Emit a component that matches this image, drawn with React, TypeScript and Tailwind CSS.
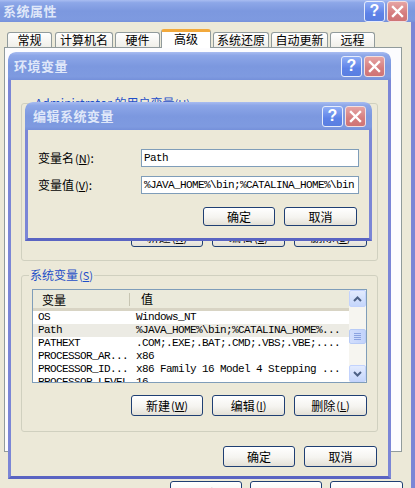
import clsx from "clsx";
import type { ReactNode } from "react";

const cjk = "font-['Noto_Sans_CJK_SC','Noto_Sans',sans-serif]";
const mono = "font-['Liberation_Mono','DejaVu_Sans_Mono',monospace] text-[11px] tracking-[-0.6px]";

function CaptionButtons() {
  return (
    <div className="flex gap-[2px]">
      <div className="w-[21px] h-[21px] rounded-[3px] border border-[#e6ecfb] bg-[linear-gradient(to_bottom,#8fadf6,#5d82e8_60%,#5a7fe0)] flex items-center justify-center text-white text-[16px] font-bold leading-none font-['Liberation_Sans',sans-serif]">
        ?
      </div>
      <div className="w-[21px] h-[21px] rounded-[3px] border border-[#f2e0e0] bg-[linear-gradient(to_bottom,#e6a4a4,#d57d7e_60%,#cf7475)] flex items-center justify-center">
        <svg width="13" height="13" viewBox="0 0 13 13">
          <path d="M2 2L11 11M11 2L2 11" stroke="white" strokeWidth="2.4" strokeLinecap="square" />
        </svg>
      </div>
    </div>
  );
}

function TitleBar({ title, h, pl, pr, rounded }: { title: string; h: string; pl: string; pr: string; rounded?: boolean }) {
  return (
    <div
      className={clsx(
        "flex items-center justify-between bg-[linear-gradient(to_bottom,#a9bdf1_0%,#8da7e8_12%,#7c98df_50%,#7e9ae0_88%,#7590da_100%)]",
        h,
        pl,
        pr,
        rounded && "rounded-t-[7px]"
      )}
    >
      <span className={clsx(cjk, "text-[13px] font-bold tracking-[0.5px] text-[#dfe7f9]")}>{title}</span>
      <CaptionButtons />
    </div>
  );
}

function XpButton({ children, className }: { children: ReactNode; className?: string }) {
  return (
    <div
      className={clsx(
        "rounded-[3px] border border-[#1f3f73] bg-[linear-gradient(to_bottom,#ffffff,#f5f4f0_55%,#e3e0d6)] flex items-center justify-center text-[12px] text-black",
        cjk,
        className
      )}
    >
      {children}
    </div>
  );
}

// label with its (x) access key
function Mn({ label, k }: { label: string; k: string }) {
  return (
    <>
      {label}
      <span className="text-[11px] ml-[1px]">
        (<span className="underline">{k}</span>)
      </span>
    </>
  );
}

function ScrollBtn({ up }: { up?: boolean }) {
  return (
    <div className="h-[17px] rounded-[2px] border border-[#c3d3fd] bg-[linear-gradient(to_bottom,#e3ebfe,#c5d6fb)] flex items-center justify-center">
      <svg width="9" height="6" viewBox="0 0 9 6">
        <path d={up ? "M1 5L4.5 1.5L8 5" : "M1 1L4.5 4.5L8 1"} stroke="#4d6185" strokeWidth="2" fill="none" />
      </svg>
    </div>
  );
}

const rows = [
  ["OS", "Windows_NT"],
  ["Path", "%JAVA_HOME%\\bin;%CATALINA_HOME%..."],
  ["PATHEXT", ".COM;.EXE;.BAT;.CMD;.VBS;.VBE;...."],
  ["PROCESSOR_AR...", "x86"],
  ["PROCESSOR_ID...", "x86 Family 16 Model 4 Stepping ..."],
  ["PROCESSOR_LEVEL", "16"],
];

const tabs = [
  { t: "常规", cls: "w-[45px] ml-[7px]" },
  { t: "计算机名", cls: "w-[58px] ml-[3px]" },
  { t: "硬件", cls: "w-[45px] ml-[2px]" },
  { t: "高级", cls: "w-[50px] ml-[1px]", sel: true },
  { t: "系统还原", cls: "w-[56px] ml-[2px]" },
  { t: "自动更新", cls: "w-[57px] ml-[2px]" },
  { t: "远程", cls: "w-[45px] ml-[2px]" },
];

function VarList() {
  return (
    <div className="w-[335px] h-[94px] border border-[#7f9db9] bg-white flex overflow-hidden">
      <div className="flex-1 flex flex-col">
        <div className={clsx(cjk, "h-[21px] shrink-0 bg-[#ebeadb] border-b-[3px] border-[#d8d4c4] flex items-center text-[12px] text-black")}>
          <span className="w-[97px] pl-[9px] border-r border-[#c7c5b2] leading-[13px]">变量</span>
          <span className="pl-[11px]">值</span>
        </div>
        {rows.map(([k, v], i) => (
          <div key={k} className={clsx(mono, "h-[13px] shrink-0 flex leading-[13px] text-black whitespace-nowrap", i === 1 && "bg-[#ecebe4]")}>
            <span className="w-[103px] pl-[5px] shrink-0">{k}</span>
            <span>{v}</span>
          </div>
        ))}
      </div>
      <div className="w-[17px] bg-[#f6f5f0] flex flex-col">
        <ScrollBtn up />
        <div className="h-[22px]" />
        <div className="h-[15px] rounded-[2px] border border-[#b8cbf6] bg-[linear-gradient(to_right,#d2defc,#c2d3fb)] flex flex-col items-center justify-center gap-[1px]">
          <div className="w-[7px] h-px bg-[#8ba3e0]" />
          <div className="w-[7px] h-px bg-[#8ba3e0]" />
          <div className="w-[7px] h-px bg-[#8ba3e0]" />
          <div className="w-[7px] h-px bg-[#8ba3e0]" />
        </div>
        <div className="flex-1" />
        <ScrollBtn />
      </div>
    </div>
  );
}

export default function App() {
  return (
    <div className="relative w-[415px] h-[488px] overflow-hidden bg-[#ece9d8]">
      {/* 系统属性 */}
      <div className="absolute left-0 top-0 w-[415px] h-[520px] flex flex-col">
        <TitleBar title="系统属性" h="h-[22px]" pl="pl-[3px]" pr="pr-[7px]" />
        <div className="flex-1 flex flex-col border-r-[4px] border-[#7b86d6]">
          <div className="flex items-end h-[18px] mt-[7px]">
            {tabs.map((tab) => (
              <div
                key={tab.t}
                className={clsx(
                  cjk,
                  "text-[12px] text-black flex items-center justify-center rounded-t-[3px] border border-b-0",
                  tab.cls,
                  tab.sel
                    ? "relative z-10 h-[19px] -mb-px bg-white border-[#919b9c] border-t-[3px] border-t-[#f2a93c] pb-[2px]"
                    : "h-[15px] bg-[linear-gradient(to_bottom,#ffffff,#f0efe9)] border-[#919b9c]"
                )}
              >
                {tab.t}
              </div>
            ))}
          </div>
          <div className="ml-[4px] w-[398px] h-[405px] border border-[#919b9c] bg-[#fcfcfe]" />
          <div className="flex gap-[8px] ml-[170px] mt-[29px]">
            <XpButton className="w-[72px] h-[25px]">确定</XpButton>
            <XpButton className="w-[72px] h-[25px]">取消</XpButton>
            <XpButton className="w-[73px] h-[25px]">应用</XpButton>
          </div>
        </div>
      </div>

      {/* 环境变量 */}
      <div className="absolute left-[8px] top-[52px] w-[383px] h-[427px] flex flex-col rounded-t-[8px] overflow-hidden">
        <TitleBar title="环境变量" h="h-[28px]" pl="pl-[6px]" pr="pr-[6px]" rounded />
        <div className="flex-1 bg-[#ece9d8] border-x-[3px] border-b-[3px] border-x-[#7b86d6] border-b-[#5a64c2] px-[10px] pt-[16px] flex flex-col">
          <fieldset className="border border-[#d0d0bf] rounded-[3px] px-[10px] pb-[13px] flex flex-col">
            <legend className={clsx(cjk, "ml-[2px] px-[1px] text-[12px] leading-[14px] text-[#1f4fc8]")}>
              Administrator 的用户变量<span className="text-[11px]">(<span className="underline">U</span>)</span>
            </legend>
            <div className="h-[103px] mt-[4px] border border-[#7f9db9] bg-white" />
            <div className="flex justify-end gap-[9px] mt-[10px]">
              <XpButton className="w-[72px] h-[20px]">
                <Mn label="新建" k="N" />
              </XpButton>
              <XpButton className="w-[73px] h-[20px]">
                <Mn label="编辑" k="E" />
              </XpButton>
              <XpButton className="w-[73px] h-[20px]">
                <Mn label="删除" k="D" />
              </XpButton>
            </div>
          </fieldset>
          <fieldset className="mt-[7px] border border-[#d0d0bf] rounded-[3px] px-[10px] pb-[15px] flex flex-col">
            <legend className={clsx(cjk, "ml-[-3px] px-[1px] text-[12px] leading-[14px] text-[#1f4fc8]")}>
              <Mn label="系统变量" k="S" />
            </legend>
            <div className="mt-[7px]">
              <VarList />
            </div>
            <div className="flex justify-end gap-[9px] mt-[12px]">
              <XpButton className="w-[72px] h-[21px]">
                <Mn label="新建" k="W" />
              </XpButton>
              <XpButton className="w-[73px] h-[21px]">
                <Mn label="编辑" k="I" />
              </XpButton>
              <XpButton className="w-[73px] h-[21px]">
                <Mn label="删除" k="L" />
              </XpButton>
            </div>
          </fieldset>
          <div className="flex justify-end gap-[9px] mt-[14px] pr-[1px]">
            <XpButton className="w-[72px] h-[21px]">确定</XpButton>
            <XpButton className="w-[73px] h-[21px]">取消</XpButton>
          </div>
        </div>
      </div>

      {/* 编辑系统变量 */}
      <div className="absolute left-[25px] top-[102px] w-[347px] h-[139px] flex flex-col rounded-t-[8px] overflow-hidden">
        <TitleBar title="编辑系统变量" h="h-[28px]" pl="pl-[8px]" pr="pr-[6px]" rounded />
        <div className="flex-1 bg-[#ece9d8] border-x-[3px] border-b-[3px] border-x-[#7b86d6] border-b-[#5a64c2] pl-[10px] pr-[10px] pt-[19px] flex flex-col">
          <div className="flex items-center h-[18px]">
            <span className={clsx(cjk, "w-[103px] text-[12px] text-black")}>
              <Mn label="变量名" k="N" />:
            </span>
            <div className={clsx(mono, "flex-1 h-[18px] border border-[#7f9db9] bg-white pl-[2px] leading-[16px] text-black whitespace-nowrap overflow-hidden")}>
              Path
            </div>
          </div>
          <div className="flex items-center h-[18px] mt-[9px]">
            <span className={clsx(cjk, "w-[103px] text-[12px] text-black")}>
              <Mn label="变量值" k="V" />:
            </span>
            <div className={clsx(mono, "flex-1 h-[18px] border border-[#7f9db9] bg-white pl-[2px] leading-[16px] text-black whitespace-nowrap overflow-hidden")}>
              %JAVA_HOME%\bin;%CATALINA_HOME%\bin
            </div>
          </div>
          <div className="flex justify-end gap-[9px] mt-[13px] pr-[2px]">
            <XpButton className="w-[72px] h-[19px]">确定</XpButton>
            <XpButton className="w-[73px] h-[19px]">取消</XpButton>
          </div>
        </div>
      </div>
    </div>
  );
}
